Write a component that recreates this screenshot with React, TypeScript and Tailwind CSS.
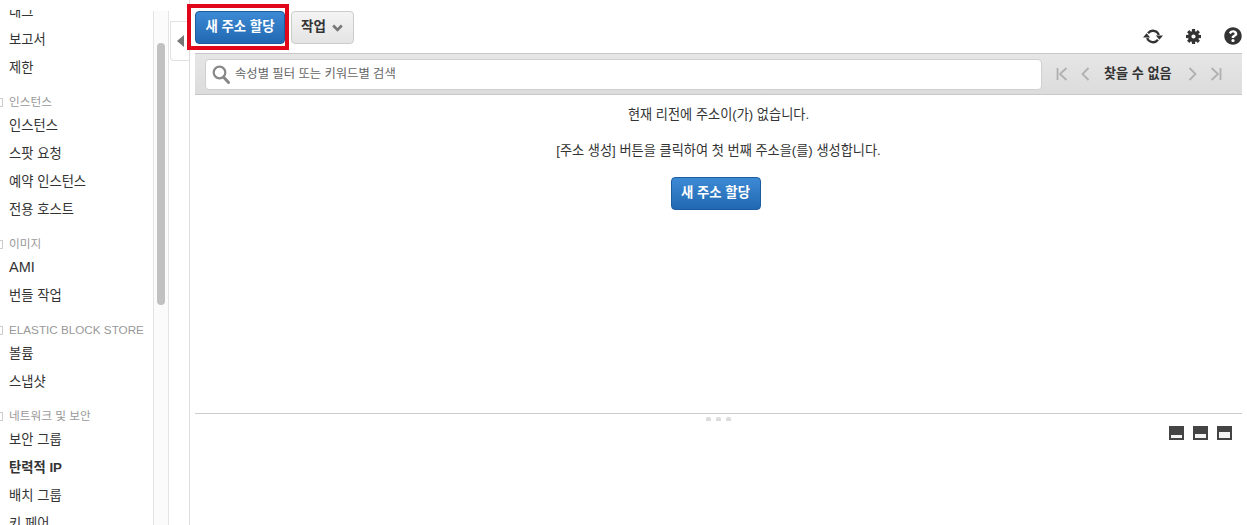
import React from "react";
import { FaQuestionCircle } from "react-icons/fa";

type NavEntry = { label: string; heading?: boolean; active?: boolean; latin?: boolean };

const nav: NavEntry[] = [
  { label: "태그" },
  { label: "보고서" },
  { label: "제한" },
  { label: "인스턴스", heading: true },
  { label: "인스턴스" },
  { label: "스팟 요청" },
  { label: "예약 인스턴스" },
  { label: "전용 호스트" },
  { label: "이미지", heading: true },
  { label: "AMI", latin: true },
  { label: "번들 작업" },
  { label: "ELASTIC BLOCK STORE", heading: true },
  { label: "볼륨" },
  { label: "스냅샷" },
  { label: "네트워크 및 보안", heading: true },
  { label: "보안 그룹" },
  { label: "탄력적 IP", active: true },
  { label: "배치 그룹" },
  { label: "키 페어" },
];

function BlueButton() {
  return (
    <button className="w-[90px] h-[33px] rounded-[4px] border border-[#1d5c9e] bg-gradient-to-b from-[#3d8ad4] to-[#2168b2] text-white text-[13.4px] font-bold">
      새 주소 할당
    </button>
  );
}

function PanelIcon({ h }: { h: number }) {
  return (
    <div className="w-[15px] h-[14px] bg-[#444] flex items-end justify-center pb-[2px]">
      <div className="w-[11px] bg-[#f4f4f4]" style={{ height: h }} />
    </div>
  );
}

const gearTeeth = [0, 45, 90, 135, 180, 225, 270, 315];

export default function App() {
  return (
    <div className="w-[1247px] h-[525px] overflow-hidden bg-white flex font-['Liberation_Sans','Noto_Sans_CJK_KR',sans-serif] text-[#333]">
      <div className="w-[153px] shrink-0 mt-[10px] overflow-hidden">
        <div className="-mt-[12px]">
          {nav.map((item, i) =>
            item.heading ? (
              <div key={i} className="mt-[10px] h-[20px] flex items-center">
                <div className="w-[3px] h-[9px] mr-[6px] border border-l-0 border-[#ccc] rounded-r-[1px]" />
                <span className="text-[11.7px] text-[#999] whitespace-nowrap">{item.label}</span>
              </div>
            ) : (
              <div
                key={i}
                className={`h-[28px] pl-[9px] flex items-center ${item.latin ? "text-[14.5px]" : "text-[13.3px]"} ${item.active ? "font-bold" : ""}`}
              >
                {item.label}
              </div>
            )
          )}
        </div>
      </div>

      <div className="w-[16px] shrink-0 mt-[11px] border-x border-[#e4e4e4] bg-[#fbfbfb] pt-[32px] pl-[3px]">
        <div className="w-[8px] h-[262px] rounded-[4px] bg-[#c1c1c1]" />
      </div>

      <div className="w-[21px] shrink-0 border-r border-[#ddd] flex flex-col">
        <div className="mt-[21px] h-[40px] ml-[1px] border-l border-b border-t border-[#e2e2e2] rounded-bl-[4px] flex pt-[13px] pl-[6px]">
          <div className="w-0 h-0 border-y-[6px] border-y-transparent border-r-[7px] border-r-[#777]" />
        </div>
      </div>

      <div className="ml-[5px] w-[1047px] shrink-0 flex flex-col">
        <div className="h-[53px] pt-[11px] flex items-start gap-[6px]">
          <div className="relative flex">
            <div className="absolute -left-[8px] -top-[7px] w-[102px] h-[46px] border-[4px] border-[#e2061b]" />
            <div className="relative">
              <BlueButton />
            </div>
          </div>
          <button className="w-[63px] h-[33px] rounded-[4px] border border-[#ccc] bg-gradient-to-b from-[#f4f4f4] to-[#e4e4e4] text-[13.5px] font-bold flex items-center justify-center gap-[6px] pr-[1px]">
            작업
            <svg width="11" height="8" viewBox="0 0 11 8" className="mt-[1px]">
              <path d="M1.2 1.5 L5.5 5.8 L9.8 1.5" fill="none" stroke="#777" strokeWidth="2.6" />
            </svg>
          </button>
          <div className="ml-auto mt-[16px] h-[18px] flex items-center">
            <svg width="20" height="15" viewBox="0 0 20 15" className="mr-[23px]">
              <path d="M5 4.2 A6.2 6.2 0 0 1 15.8 6" fill="none" stroke="#333" strokeWidth="2.3" />
              <path d="M12.8 6.6 L20 6.6 L16.4 10.8 Z" fill="#333" />
              <path d="M15 10.8 A6.2 6.2 0 0 1 4.2 9" fill="none" stroke="#333" strokeWidth="2.3" />
              <path d="M0 8.4 L7.2 8.4 L3.6 4.2 Z" fill="#333" />
            </svg>
            <svg width="15" height="15" viewBox="0 0 15 15" className="mr-[23px]">
              <path
                fillRule="evenodd"
                d="M7.5 2 A5.5 5.5 0 1 1 7.5 13 A5.5 5.5 0 1 1 7.5 2 Z M7.5 5.4 A2.1 2.1 0 1 0 7.5 9.6 A2.1 2.1 0 1 0 7.5 5.4 Z"
                fill="#333"
              />
              {gearTeeth.map((deg) => (
                <rect key={deg} x="5.9" y="0" width="3.2" height="3" fill="#333" transform={`rotate(${deg} 7.5 7.5)`} />
              ))}
            </svg>
            <FaQuestionCircle className="w-[18px] h-[18px]" />
          </div>
        </div>

        <div className="h-[42px] bg-gradient-to-b from-[#e6e6e6] to-[#dcdcdc] border-y border-[#c8c8c8] flex items-center pl-[10px]">
          <div className="w-[837px] h-[31px] bg-white rounded-[4px] border border-[#d0d0d0] flex items-center pl-[6px] gap-[5px]">
            <svg width="18" height="19" viewBox="0 0 18 19">
              <circle cx="7.5" cy="7.5" r="5.8" fill="none" stroke="#888" strokeWidth="2.2" />
              <path d="M11.5 12 L16.5 17.5" stroke="#888" strokeWidth="3" strokeLinecap="round" />
            </svg>
            <span className="text-[12.3px] text-[#666]">속성별 필터 또는 키워드별 검색</span>
          </div>
          <div className="flex items-center ml-[14px]">
            <svg width="12" height="14" viewBox="0 0 12 14" fill="none" stroke="#b0b0b0" strokeWidth="1.8">
              <path d="M1.5 1 V13 M10.5 1 L4 7 L10.5 13" />
            </svg>
            <svg width="9" height="14" viewBox="0 0 9 14" fill="none" stroke="#b0b0b0" strokeWidth="1.8" className="ml-[13px]">
              <path d="M7.5 1 L1.5 7 L7.5 13" />
            </svg>
            <span className="ml-[14px] text-[13.1px] font-bold whitespace-nowrap">찾을 수 없음</span>
            <svg width="9" height="14" viewBox="0 0 9 14" fill="none" stroke="#b0b0b0" strokeWidth="1.8" className="ml-[16px]">
              <path d="M1.5 1 L7.5 7 L1.5 13" />
            </svg>
            <svg width="12" height="14" viewBox="0 0 12 14" fill="none" stroke="#b0b0b0" strokeWidth="1.8" className="ml-[13px]">
              <path d="M1.5 1 L8 7 L1.5 13 M10.5 1 V13" />
            </svg>
          </div>
        </div>

        <div className="h-[319px] flex flex-col items-center border-b border-[#ccc] text-[13.2px]">
          <p className="mt-[10px] h-[20px] leading-[20px]">현재 리전에 주소이(가) 없습니다.</p>
          <p className="mt-[16px] h-[20px] leading-[20px]">[주소 생성] 버튼을 클릭하여 첫 번째 주소을(를) 생성합니다.</p>
          <div className="mt-[16px] mr-[6px]">
            <BlueButton />
          </div>
        </div>

        <div className="flex justify-center gap-[5px] mt-[3px]">
          {[0, 1, 2].map((d) => (
            <div key={d} className="w-[5px] h-[4px] rounded-t-[2px] bg-[#dcdcdc]" />
          ))}
        </div>

        <div className="flex justify-end gap-[9px] mt-[5px] pr-[10px]">
          <PanelIcon h={3} />
          <PanelIcon h={4} />
          <PanelIcon h={6} />
        </div>
      </div>
    </div>
  );
}
